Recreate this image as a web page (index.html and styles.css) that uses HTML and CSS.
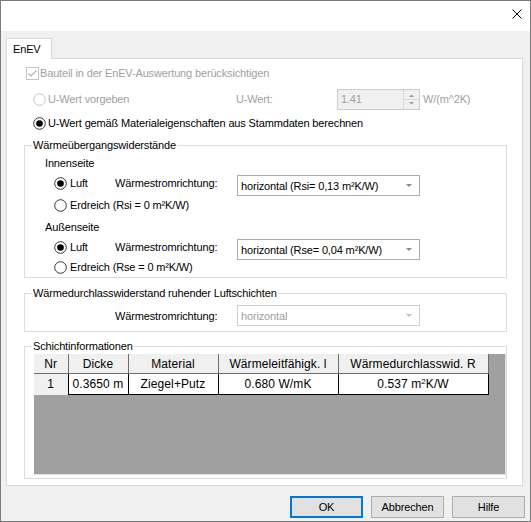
FILE: index.html
```html
<!DOCTYPE html>
<html lang="de">
<head>
    <meta charset="UTF-8">
    <title>EnEV</title>
    <link rel="stylesheet" href="styles.css">
</head>
<body>
    <div class="titlebar">
        <svg class="close" width="10" height="10" viewBox="0 0 10 10">
            <path d="M0.5 0.5 L9.5 9.5 M9.5 0.5 L0.5 9.5" stroke="#000" stroke-width="1" fill="none"/>
        </svg>
    </div>

    <div class="tabs">
        <div class="tab">EnEV</div>
    </div>

    <div class="panel">
        <div class="row check-row disabled">
            <svg class="box" width="13" height="13" viewBox="0 0 13 13">
                <rect x="0.5" y="0.5" width="12" height="12" fill="#fff" stroke="#c4c4c4"/>
                <path d="M2.5 6.5 L5 9 L10.5 3.5" stroke="#b0b0b0" stroke-width="1.2" fill="none"/>
            </svg>
            <span>Bauteil in der EnEV-Auswertung berücksichtigen</span>
        </div>

        <div class="row radio-row uwert-row disabled">
            <span class="opt-wide">
                <svg class="radio" width="13" height="13" viewBox="0 0 13 13">
                    <circle cx="6.5" cy="6.5" r="5.8" fill="#fff" stroke="#c4c4c4"/>
                </svg>
                U-Wert vorgeben
            </span>
            <span class="uwert-label">U-Wert:</span>
            <div class="spin">
                <span class="spin-value">1.41</span>
                <span class="spin-buttons">
                    <svg width="15" height="19" viewBox="0 0 15 19">
                        <path d="M5 7 L10 7 L7.5 4.5 Z" fill="#9a9a9a"/>
                        <line x1="0" y1="9.5" x2="15" y2="9.5" stroke="#d8d8d8"/>
                        <path d="M5 12 L10 12 L7.5 14.5 Z" fill="#9a9a9a"/>
                    </svg>
                </span>
            </div>
            <span class="unit">W/(m^2K)</span>
        </div>

        <div class="row radio-row calc-row">
            <svg class="radio" width="13" height="13" viewBox="0 0 13 13">
                <circle cx="6.5" cy="6.5" r="5.8" fill="#fff" stroke="#333"/>
                <circle cx="6.5" cy="6.5" r="3.3" fill="#000"/>
            </svg>
            <span>U-Wert gemäß Materialeigenschaften aus Stammdaten berechnen</span>
        </div>

        <fieldset class="group group-r">
            <legend>Wärmeübergangswiderstände</legend>

            <div class="side-label">Innenseite</div>
            <div class="dir-row">
                <span class="opt">
                    <svg class="radio" width="13" height="13" viewBox="0 0 13 13">
                        <circle cx="6.5" cy="6.5" r="5.8" fill="#fff" stroke="#333"/>
                        <circle cx="6.5" cy="6.5" r="3.3" fill="#000"/>
                    </svg>
                    Luft
                </span>
                <span class="dir-label">Wärmestromrichtung:</span>
                <div class="combo">
                    <span>horizontal (Rsi= 0,13 m²K/W)</span>
                    <svg width="6" height="4" viewBox="0 0 6 4"><path d="M0 0 L6 0 L3 3 Z" fill="#8a8a8a"/></svg>
                </div>
            </div>
            <div class="row earth-row">
                <svg class="radio" width="13" height="13" viewBox="0 0 13 13">
                    <circle cx="6.5" cy="6.5" r="5.8" fill="#fff" stroke="#333"/>
                </svg>
                <span>Erdreich (Rsi = 0 m²K/W)</span>
            </div>

            <div class="side-label second">Außenseite</div>
            <div class="dir-row">
                <span class="opt">
                    <svg class="radio" width="13" height="13" viewBox="0 0 13 13">
                        <circle cx="6.5" cy="6.5" r="5.8" fill="#fff" stroke="#333"/>
                        <circle cx="6.5" cy="6.5" r="3.3" fill="#000"/>
                    </svg>
                    Luft
                </span>
                <span class="dir-label">Wärmestromrichtung:</span>
                <div class="combo">
                    <span>horizontal (Rse= 0,04 m²K/W)</span>
                    <svg width="6" height="4" viewBox="0 0 6 4"><path d="M0 0 L6 0 L3 3 Z" fill="#8a8a8a"/></svg>
                </div>
            </div>
            <div class="row earth-row last">
                <svg class="radio" width="13" height="13" viewBox="0 0 13 13">
                    <circle cx="6.5" cy="6.5" r="5.8" fill="#fff" stroke="#333"/>
                </svg>
                <span>Erdreich (Rse = 0 m²K/W)</span>
            </div>
        </fieldset>

        <fieldset class="group group-air">
            <legend>Wärmedurchlasswiderstand ruhender Luftschichten</legend>
            <div class="air-row">
                <span class="dir-label">Wärmestromrichtung:</span>
                <div class="combo off">
                    <span>horizontal</span>
                    <svg width="6" height="4" viewBox="0 0 6 4"><path d="M0 0 L6 0 L3 3 Z" fill="#c0c0c0"/></svg>
                </div>
            </div>
        </fieldset>

        <fieldset class="group group-layers">
            <legend>Schichtinformationen</legend>
            <div class="grid">
                <table>
                    <colgroup>
                        <col style="width:34px">
                        <col style="width:60px">
                        <col style="width:90px">
                        <col style="width:120px">
                        <col style="width:150px">
                    </colgroup>
                    <tr class="head">
                        <th>Nr</th>
                        <th>Dicke</th>
                        <th>Material</th>
                        <th>Wärmeleitfähigk. l</th>
                        <th>Wärmedurchlasswid. R</th>
                    </tr>
                    <tr>
                        <td class="rowhead">1</td>
                        <td>0.3650 m</td>
                        <td>Ziegel+Putz</td>
                        <td>0.680 W/mK</td>
                        <td>0.537 m<sup>2</sup>K/W</td>
                    </tr>
                </table>
            </div>
        </fieldset>
    </div>

    <div class="buttons">
        <button class="default">OK</button>
        <button>Abbrechen</button>
        <button>Hilfe</button>
    </div>
</body>
</html>
```

FILE: styles.css
```css
body {
    margin: 0;
    width: 531px;
    height: 522px;
    box-sizing: border-box;
    border: 1px solid #7a7a7a;
    background-color: #f0f0f0;
    font-family: "Liberation Sans", Arial, sans-serif;
    font-size: 11px;
    letter-spacing: -0.15px;
    color: #000;
    overflow: hidden;
}

.titlebar {
    height: 30px;
    background-color: #fff;
    display: flex;
    justify-content: flex-end;
    align-items: flex-start;
}

.close {
    margin: 8px 8px 0 0;
}

.tabs {
    padding: 7px 0 0 5px;
}

.tab {
    position: relative;
    z-index: 1;
    width: 46px;
    height: 21px;
    box-sizing: border-box;
    margin-bottom: -1px;
    padding-left: 6px;
    line-height: 20px;
    background-color: #fff;
    border: 1px solid #d9d9d9;
    border-bottom: none;
}

.panel {
    margin-left: 5px;
    width: 517px;
    height: 428px;
    box-sizing: border-box;
    border: 1px solid #d9d9d9;
    background-color: #fff;
}

.row {
    display: flex;
    align-items: center;
    height: 20px;
}

.disabled {
    color: #a0a0a0;
}

.check-row {
    margin-top: 4px;
    padding-left: 19px;
}

.check-row .box {
    margin-right: 1px;
}

.radio-row {
    padding-left: 26px;
}

.uwert-row {
    margin-top: 6px;
}

.calc-row {
    margin-top: 4px;
}

.radio {
    flex-shrink: 0;
    margin-right: 2px;
}

.opt-wide {
    display: flex;
    align-items: center;
    width: 203px;
}

.uwert-label {
    width: 101px;
}

.spin {
    display: flex;
    width: 83px;
    height: 21px;
    box-sizing: border-box;
    border: 1px solid #cccccc;
    background-color: #f0f0f0;
}

.spin-value {
    flex: 1;
    padding-left: 3px;
    line-height: 19px;
}

.spin-buttons {
    width: 15px;
    border-left: 1px solid #d8d8d8;
}

.spin-buttons svg {
    display: block;
}

.unit {
    margin-left: 3px;
}

/* group boxes */
.group {
    margin: 5px 0 0 17px;
    width: 483px;
    box-sizing: border-box;
    padding: 0 0 2px 0;
    min-width: 0;
    border: 1px solid #dcdcdc;
}

.group legend {
    margin-left: 7px;
    padding: 0 1px;
    line-height: 14px;
}

.side-label {
    margin-top: 3px;
    padding-left: 20px;
    line-height: 16px;
}

.side-label.second {
    margin-top: 4px;
}

.dir-row {
    display: flex;
    align-items: flex-start;
    height: 22px;
    margin-top: 2px;
    padding-left: 29px;
}

.opt {
    display: flex;
    align-items: center;
    width: 61px;
    height: 20px;
}

.opt .radio,
.earth-row .radio {
    margin-right: 3px;
}

.dir-label {
    width: 122px;
    line-height: 20px;
}

.combo {
    display: flex;
    align-items: center;
    justify-content: space-between;
    width: 183px;
    height: 21px;
    box-sizing: border-box;
    margin-top: 2px;
    padding: 0 7px 0 3px;
    border: 1px solid #acacac;
    background-color: #fff;
}

.combo.off {
    margin-top: 0;
    color: #a0a0a0;
    border-color: #cfcfcf;
}

.earth-row {
    padding-left: 29px;
}

.earth-row.last {
    height: 16px;
}

.group-air {
    margin-top: 8px;
    padding-bottom: 5px;
}

.air-row {
    display: flex;
    align-items: center;
    margin-top: 5px;
    padding-left: 90px;
}

.group-layers {
    margin-top: 7px;
    padding-bottom: 3px;
}

/* layer table */
.grid {
    margin: 1px 0 0 9px;
    width: 471px;
    height: 120px;
    background-color: #a0a0a0;
    border-right: 1px solid #e3e3e3;
    border-bottom: 1px solid #e3e3e3;
}

.grid table {
    border-collapse: collapse;
    table-layout: fixed;
    width: 454px;
    font-size: 12px;
    letter-spacing: 0.1px;
}

.grid th {
    height: 19px;
    padding: 0;
    font-weight: normal;
    background-color: #f0f0f0;
    border-right: 1px solid #6d6d6d;
    border-bottom: 1px solid #6d6d6d;
}

.grid td {
    height: 20px;
    padding: 0;
    text-align: center;
    background-color: #fff;
    border: 1px solid #000;
}

.grid td.rowhead {
    background-color: #f0f0f0;
    border-left: none;
    border-bottom: none;
}

.grid sup {
    font-size: 8px;
    vertical-align: 4px;
    line-height: 0;
}

/* bottom buttons */
.buttons {
    display: flex;
    justify-content: flex-end;
    gap: 8px;
    margin-top: 10px;
    padding-right: 5px;
}

.buttons button {
    width: 73px;
    height: 22px;
    padding: 0;
    font-family: "Liberation Sans", Arial, sans-serif;
    font-size: 11px;
    letter-spacing: -0.15px;
    color: #000;
    background-color: #e1e1e1;
    border: 1px solid #adadad;
}

.buttons button.default {
    border: 2px solid #0078d7;
}
```
